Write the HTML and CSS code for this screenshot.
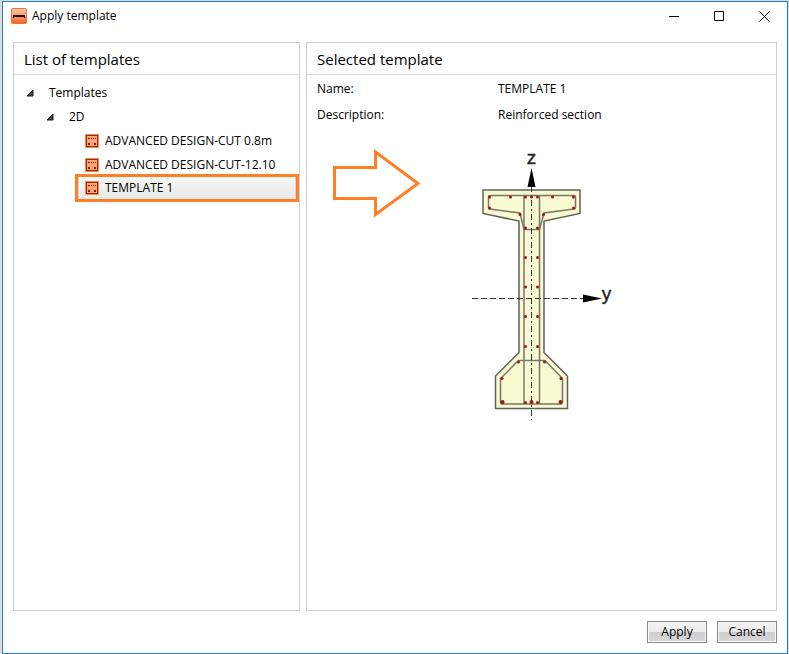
FILE: index.html
```html
<!DOCTYPE html>
<html lang="en">
<head>
    <meta charset="UTF-8">
    <meta name="viewport" content="width=device-width, initial-scale=1.0">
    <title>Apply template</title>
    <link rel="stylesheet" href="styles.css">
</head>
<body>
    <!-- shared icon for the 2D section templates -->
    <svg class="symbols" width="0" height="0" aria-hidden="true">
        <symbol id="icon-section" viewBox="0 0 14 14">
            <rect width="14" height="14" fill="#f58a4c"/>
            <rect x="1.5" y="1.5" width="11" height="11" fill="#ffa574" stroke="#96281b"/>
            <path d="M3 4h2v1H3zM6 4h1v1H6zM8 4h1v1H8zM10 4h1v1h-1zM3 9h2v2H3zM9 9h2v2H9z" fill="#7d1f12"/>
        </symbol>
    </svg>

    <div class="window">
        <header class="title-bar">
            <svg class="app-icon" width="16" height="16" viewBox="0 0 16 16" aria-hidden="true">
                <defs>
                    <linearGradient id="app-fill" x1="0" y1="0" x2="0" y2="1">
                        <stop offset="0" stop-color="#f9c3a3"/>
                        <stop offset="0.4" stop-color="#f8a679"/>
                        <stop offset="1" stop-color="#ef6420"/>
                    </linearGradient>
                </defs>
                <rect x="0.5" y="0.5" width="15" height="15" rx="1" fill="url(#app-fill)" stroke="#e2753f"/>
                <path d="M2 7h12v3h-1V9H3v1H2z" fill="#1c1410"/>
            </svg>
            <h1>Apply template</h1>
            <div class="window-buttons">
                <button type="button" aria-label="Minimize">
                    <svg width="11" height="11" viewBox="0 0 11 11"><path d="M0 5.5h10"/></svg>
                </button>
                <button type="button" aria-label="Maximize">
                    <svg width="11" height="11" viewBox="0 0 11 11"><path d="M0.5 0.5h9v9h-9z"/></svg>
                </button>
                <button type="button" aria-label="Close">
                    <svg width="11" height="11" viewBox="0 0 11 11"><path d="M0.5 0.5l10 10M10.5 0.5l-10 10"/></svg>
                </button>
            </div>
        </header>

        <main>
            <section class="panel template-list">
                <h2>List of templates</h2>
                <ul class="tree">
                    <li>
                        <button type="button" class="node" aria-expanded="true">
                            <svg class="toggle" width="8" height="8" viewBox="0 0 8 8"><path d="M7 1v6H1z"/></svg>
                            Templates
                        </button>
                        <ul>
                            <li>
                                <button type="button" class="node" aria-expanded="true">
                                    <svg class="toggle" width="8" height="8" viewBox="0 0 8 8"><path d="M7 1v6H1z"/></svg>
                                    2D
                                </button>
                                <ul class="leaves">
                                    <li>
                                        <button type="button" class="leaf">
                                            <svg width="14" height="14"><use href="#icon-section"/></svg>
                                            ADVANCED DESIGN-CUT 0.8m
                                        </button>
                                    </li>
                                    <li>
                                        <button type="button" class="leaf">
                                            <svg width="14" height="14"><use href="#icon-section"/></svg>
                                            ADVANCED DESIGN-CUT-12.10
                                        </button>
                                    </li>
                                    <li>
                                        <button type="button" class="leaf selected">
                                            <svg width="14" height="14"><use href="#icon-section"/></svg>
                                            TEMPLATE 1
                                        </button>
                                    </li>
                                </ul>
                            </li>
                        </ul>
                    </li>
                </ul>
            </section>

            <section class="panel template-details">
                <h2>Selected template</h2>
                <dl>
                    <dt>Name:</dt>
                    <dd>TEMPLATE 1</dd>
                    <dt>Description:</dt>
                    <dd>Reinforced section</dd>
                </dl>
                <div class="preview">
                    <svg class="arrow" width="90" height="68" viewBox="0 0 90 68" aria-hidden="true">
                        <path d="M3.5 18.5h41V3L87 34.5 44.5 65.5V49.5h-41z"/>
                    </svg>
                    <svg class="section" width="144" height="274" viewBox="470 149 144 274" role="img" aria-label="Reinforced section">
                        <!-- concrete outline -->
                        <path class="concrete" d="M483 190H580V213.5L544 221V352.5L567.5 376V408.5H495.5V376L519 352.5V221L483 213.5z"/>
                        <!-- stirrups -->
                        <path class="stirrup" d="M490 195.5H574Q575.5 195.5 575.5 197V207.5Q575.5 209 574 209L544 213L539.5 229.5H524L520 213L490 209Q488.5 209 488.5 207.5V197Q488.5 195.5 490 195.5z"/>
                        <path class="stirrup" d="M524 195.5V404M539.5 195.5V404"/>
                        <path class="stirrup" d="M518.5 360.5H545L562.5 378.5V402.5Q562.5 404 561 404H502Q500.5 404 500.5 402.5V378.5z"/>
                        <!-- axes -->
                        <path class="axis" d="M531.5 186V420" stroke-dasharray="6 3 2 3"/>
                        <path class="axis" d="M472 298.5H584" stroke-dasharray="6 3"/>
                        <path d="M531.5 168L535.5 187H527.5zM583 294.5L602 298.5L583 302.5z"/>
                        <!-- rebars -->
                        <g class="rebars">
                            <circle cx="489.5" cy="197" r="1.5"/><circle cx="510.5" cy="197" r="1.5"/>
                            <circle cx="525.5" cy="197" r="1.5"/><circle cx="531.5" cy="197" r="1.5"/>
                            <circle cx="537.5" cy="197" r="1.5"/><circle cx="552.5" cy="197" r="1.5"/>
                            <circle cx="573.5" cy="197" r="1.5"/><circle cx="489.5" cy="208" r="1.5"/>
                            <circle cx="573.5" cy="208" r="1.5"/><circle cx="520" cy="214.5" r="1.5"/>
                            <circle cx="543.5" cy="214.5" r="1.5"/><circle cx="525.5" cy="228" r="1.5"/>
                            <circle cx="537.5" cy="228" r="1.5"/><circle cx="525.5" cy="257.5" r="1.5"/>
                            <circle cx="537.5" cy="257.5" r="1.5"/><circle cx="525.5" cy="287" r="1.5"/>
                            <circle cx="537.5" cy="287" r="1.5"/><circle cx="525.5" cy="316.5" r="1.5"/>
                            <circle cx="537.5" cy="316.5" r="1.5"/><circle cx="525.5" cy="346.5" r="1.5"/>
                            <circle cx="537.5" cy="346.5" r="1.5"/><circle cx="518.5" cy="362" r="1.5"/>
                            <circle cx="544.5" cy="362" r="1.5"/><circle cx="502" cy="378.5" r="1.5"/>
                            <circle cx="561" cy="378.5" r="1.5"/><circle cx="502.5" cy="402" r="2"/>
                            <circle cx="525.5" cy="402.5" r="1.5"/><circle cx="531.5" cy="402" r="2"/>
                            <circle cx="537.5" cy="402.5" r="1.5"/><circle cx="560.5" cy="402" r="2"/>
                        </g>
                        <text x="531.5" y="164" text-anchor="middle">z</text>
                        <text x="606.5" y="300" text-anchor="middle">y</text>
                    </svg>
                </div>
            </section>
        </main>

        <footer>
            <button type="button">Apply</button>
            <button type="button">Cancel</button>
        </footer>
    </div>
</body>
</html>
```
FILE: styles.css
```css
* {
    margin: 0;
    padding: 0;
    box-sizing: border-box;
}

body {
    padding: 1px 1px 0 2px;
    background-color: #dcdcdc;
    color: #000;
    font-family: "Open Sans", "Noto Sans", sans-serif;
    font-size: 12px;
    line-height: 16px;
}

button {
    border: none;
    background: none;
    color: inherit;
    font: inherit;
}

.symbols {
    position: absolute;
}

.window {
    display: flex;
    flex-direction: column;
    min-height: calc(100vh - 1px);
    border: 1px solid #1c7fd0;
    background-color: #fff;
}

/* title bar */
.title-bar {
    display: flex;
    align-items: center;
    height: 28px;
    padding-left: 8px;
}

.title-bar h1 {
    flex-grow: 1;
    margin-left: 5px;
    font-size: 12px;
    font-weight: normal;
}

.window-buttons {
    display: flex;
}

.window-buttons button {
    display: flex;
    align-items: center;
    justify-content: center;
    width: 45px;
    height: 28px;
}

.window-buttons path {
    fill: none;
    stroke: #000;
}

/* panels */
main {
    display: flex;
    flex-grow: 1;
    gap: 6px;
    padding: 12px 10px 10px;
}

.panel {
    border: 1px solid #d0d0d0;
}

.panel h2 {
    padding: 4px 10px 3px;
    border-bottom: 1px solid #dcdcdc;
    font-size: 15px;
    font-weight: normal;
    line-height: 24px;
}

.template-list {
    flex: 0 0 287px;
}

.template-details {
    flex-grow: 1;
}

/* tree */
.tree {
    padding: 6px 0 0 12px;
}

.tree ul {
    padding-left: 20px;
}

.tree ul.leaves {
    padding-left: 32px;
}

.tree li {
    list-style: none;
}

.node,
.leaf {
    display: flex;
    align-items: center;
    width: 100%;
    height: 24px;
    text-align: left;
}

.node {
    gap: 15px;
}

.toggle path {
    fill: #404040;
    stroke: #1e1e1e;
}

.leaf {
    gap: 6px;
    padding-left: 7px;
}

.leaves li {
    padding-right: 3px;
}

.leaf.selected {
    height: 22px;
    border: solid #d9d9d9;
    border-width: 0 1px;
    padding-left: 6px;
    background: linear-gradient(#f8f8f8, #e8e8e8);
    outline: 3px solid #ff7f27;
}

/* details */
dl {
    display: grid;
    grid-template-columns: 181px 1fr;
    row-gap: 10px;
    padding: 6px 10px 0;
}

.preview {
    display: flex;
    align-items: flex-start;
    gap: 49px;
    padding: 26px 0 0 24px;
}

.arrow {
    fill: none;
    stroke: #ff7f27;
    stroke-width: 3;
}

.concrete {
    fill: #f9f9d2;
    stroke: #60605a;
    stroke-width: 1.5;
}

.stirrup {
    fill: none;
    stroke: #77776f;
    stroke-width: 1.5;
}

.axis {
    fill: none;
    stroke: #333;
}

.rebars {
    fill: #a01414;
}

.section {
    overflow: visible;
}

.section text {
    fill: #222;
    stroke: #222;
    stroke-width: 0.4;
    font-family: "Liberation Sans", Arial, sans-serif;
    font-size: 19px;
}

/* footer */
footer {
    display: flex;
    justify-content: flex-end;
    gap: 10px;
    padding: 0 10px 10px;
}

footer button {
    width: 60px;
    height: 22px;
    border: 1px solid #8a8a8a;
    box-shadow: inset 0 0 0 1px #f8f8f8;
    background: linear-gradient(#f3f3f3, #ebebeb 50%, #cdcdcd 50%, #d8d8d8);
}
```
